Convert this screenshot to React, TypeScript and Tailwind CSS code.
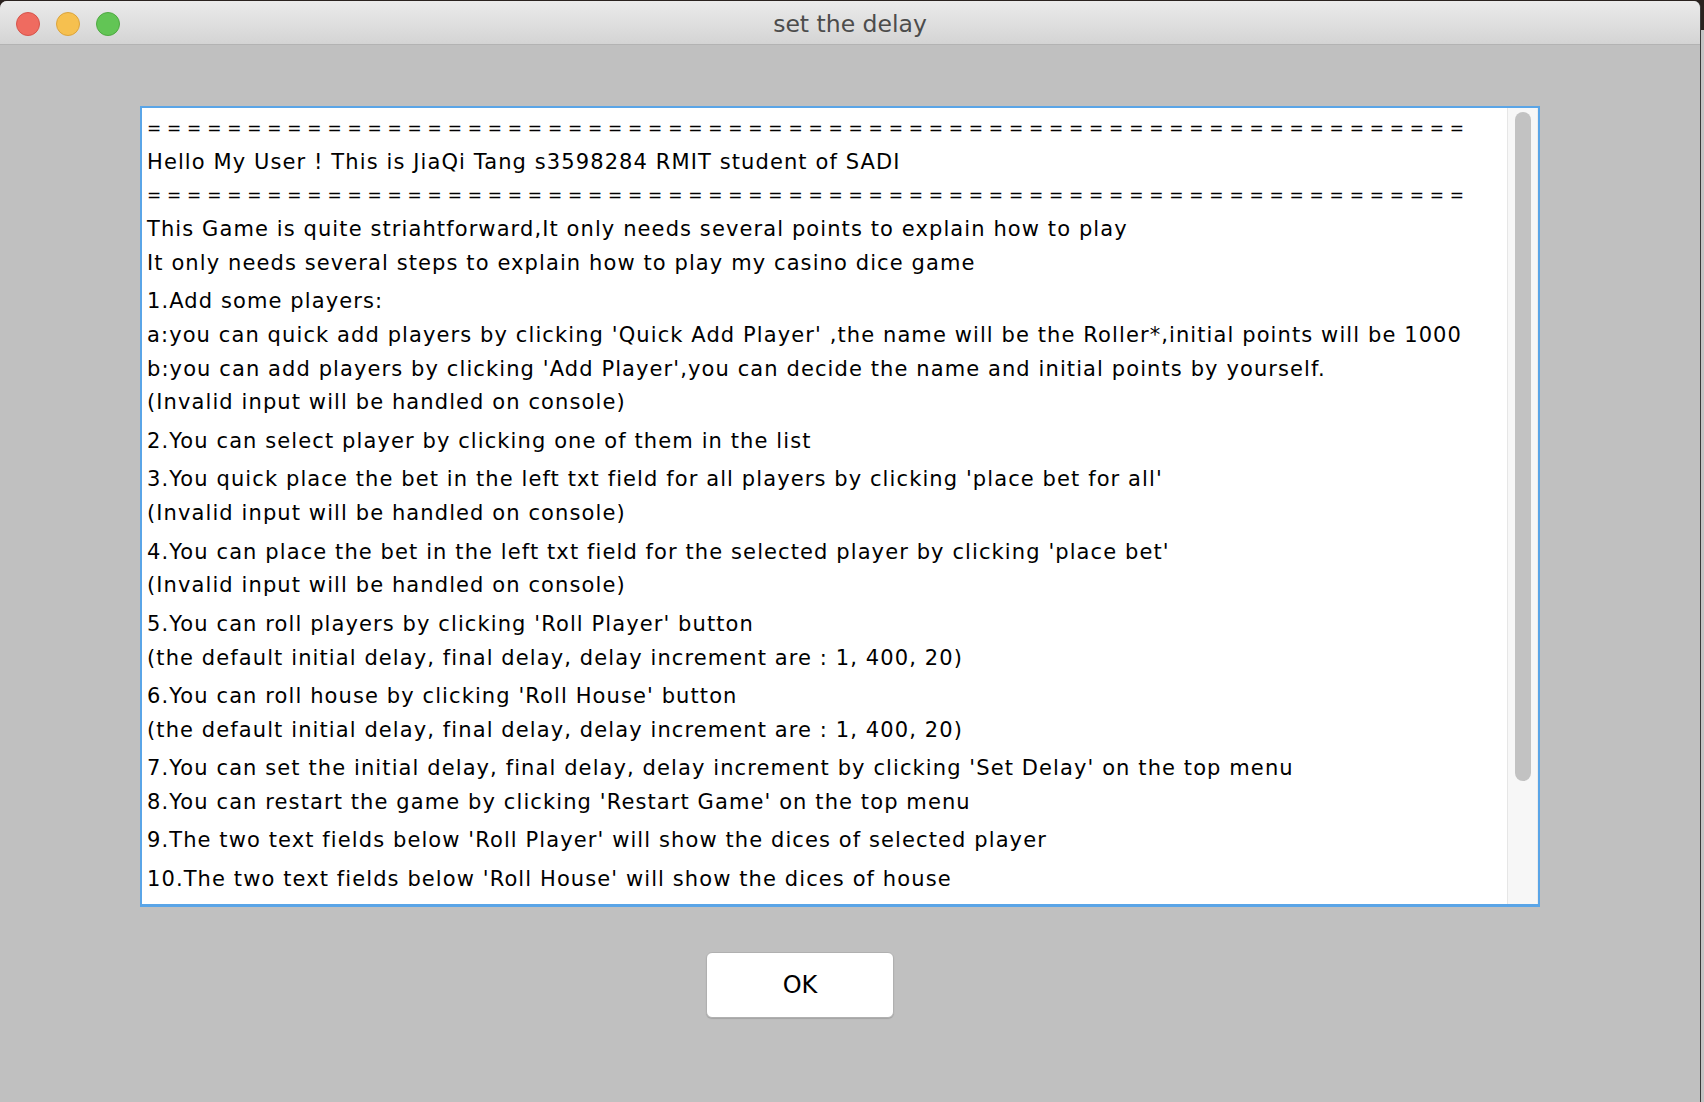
import React from "react";

const EQ = "=".repeat(66);

const blocks: string[][] = [
  [
    EQ,
    "Hello My User ! This is JiaQi Tang s3598284 RMIT student of SADI",
    EQ,
    "This Game is quite striahtforward,It only needs several points to explain how to play",
    "It only needs several steps to explain how to play my casino dice game",
  ],
  [
    "1.Add some players:",
    "a:you can quick add players by clicking 'Quick Add Player' ,the name will be the Roller*,initial points will be 1000",
    "b:you can add players by clicking 'Add Player',you can decide the name and initial points by yourself.",
    "(Invalid input will be handled on console)",
  ],
  ["2.You can select player by clicking one of them in the list"],
  [
    "3.You quick place the bet in the left txt field for all players by clicking 'place bet for all'",
    "(Invalid input will be handled on console)",
  ],
  [
    "4.You can place the bet in the left txt field for the selected player by clicking 'place bet'",
    "(Invalid input will be handled on console)",
  ],
  [
    "5.You can roll players by clicking 'Roll Player' button",
    "(the default initial delay, final delay, delay increment are : 1, 400, 20)",
  ],
  [
    "6.You can roll house by clicking 'Roll House' button",
    "(the default initial delay, final delay, delay increment are : 1, 400, 20)",
  ],
  [
    "7.You can set the initial delay, final delay, delay increment by clicking 'Set Delay' on the top menu",
    "8.You can restart the game by clicking 'Restart Game' on the top menu",
  ],
  ["9.The two text fields below 'Roll Player' will show the dices of selected player"],
  ["10.The two text fields below 'Roll House' will show the dices of house"],
  ["11.The result of each round will be shown in the text area of the main window"],
  ["12.Have fun and enjoy the casino dice game !"],
];

export default function App() {
  return (
    <div className="w-[1704px] h-[1102px] bg-[#2a221f] flex overflow-hidden" style={{ fontFamily: '"DejaVu Sans", "Liberation Sans", sans-serif' }}>
      <div className="w-[1701px] h-[1102px] mt-[1px] flex flex-col rounded-t-[7px] overflow-hidden bg-[#c0c0c0] border-r border-[#3a3a3a]">
        {/* title bar */}
        <div className="h-[44px] shrink-0 flex items-center relative bg-gradient-to-b from-[#ebebeb] to-[#d4d4d4] border-b border-[#b3b3b3]">
          <div className="flex items-center gap-[16px] pl-[16px] pt-[3px]">
            <span className="w-[24px] h-[24px] rounded-full bg-[#ef6b60] border border-[#d6544b]" />
            <span className="w-[24px] h-[24px] rounded-full bg-[#f6c04f] border border-[#dba43d]" />
            <span className="w-[24px] h-[24px] rounded-full bg-[#62c555] border border-[#4fa942]" />
          </div>
          <div className="absolute inset-0 flex items-center justify-center pointer-events-none">
            <span className="text-[23.5px] text-[#4c4c4c] leading-none pt-[5px]">set the delay</span>
          </div>
        </div>
        {/* body */}
        <div className="flex-1 flex flex-col pt-[61px]">
          <div className="ml-[140px] w-[1400px] h-[801px] border-2 border-b-[3px] border-[#5aa5e7] bg-white flex overflow-hidden">
            <div className="flex-1 overflow-hidden pl-[5px] pt-[4px] text-black text-[21px] leading-[33.7px] tracking-[1.1px] whitespace-nowrap">
              {blocks.map((b, i) => (
                <div key={i} className={i === 0 ? "" : i === 10 ? "mt-[1px]" : "mt-[4.8px]"}>
                  {b.map((line, j) =>
                    line === EQ ? (
                      <div key={j} className="text-[17px] tracking-[5.8px] leading-[33.7px]">{line}</div>
                    ) : (
                      <div key={j}>{line}</div>
                    )
                  )}
                </div>
              ))}
            </div>
            <div className="w-[31px] shrink-0 bg-[#f7f7f7] border-l border-[#e6e6e6] border-r border-r-[#ececec] pt-[4px] flex justify-center">
              <div className="w-[16px] h-[669px] rounded-full bg-[#c2c2c2]" />
            </div>
          </div>
          <div className="pl-[706px] pt-[45px]">
            <div className="w-[188px] h-[66px] rounded-[6px] bg-white border border-[#b0b0b0] shadow-[0_1px_1px_rgba(0,0,0,0.15)] flex items-center justify-center">
              <span className="text-[24px] text-black leading-none">OK</span>
            </div>
          </div>
        </div>
      </div>
      <div className="flex-1 flex flex-col">
        <div className="h-[30px] bg-[#2a221f]" />
        <div className="flex-1 bg-[#c4c4c4]" />
      </div>
    </div>
  );
}
